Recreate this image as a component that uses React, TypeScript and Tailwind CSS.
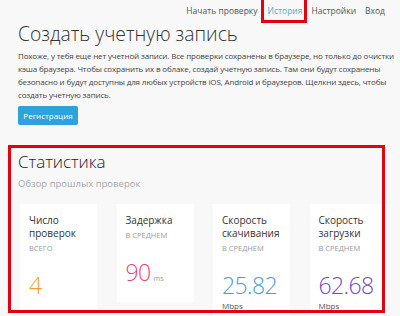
const font = { fontFamily: '"Open Sans", "Liberation Sans", sans-serif' };

type Stat = {
  title: string[];
  note: string;
  value: string;
  unit?: string;
  unitBelow?: boolean;
  color: string;
};

const stats: Stat[] = [
  { title: ["Число", "проверок"], note: "всего", value: "4", color: "text-[#f2a12e]" },
  { title: ["Задержка"], note: "в среднем", value: "90", unit: "ms", color: "text-[#e4477b]" },
  { title: ["Скорость", "скачивания"], note: "в среднем", value: "25.82", unit: "Mbps", unitBelow: true, color: "text-[#459ed8]" },
  { title: ["Скорость", "загрузки"], note: "в среднем", value: "62.68", unit: "Mbps", unitBelow: true, color: "text-[#7048cf]" }
];

export default function App() {
  return (
    <div className="h-[316px] w-[400px] overflow-hidden bg-[#f8f8f8] text-[#333]" style={font}>
      <nav className="flex h-[22px] items-center justify-end gap-[9px] pr-[15px] text-[8.5px] text-[#555]">
        <span className="mr-[1px]">Начать проверку</span>
        <span className="relative text-[#52acd9]">
          История
          <span className="absolute -left-[7px] -right-[5px] -bottom-[6px] -top-[9px] border-[3px] border-[#e4000f]" />
        </span>
        <span>Настройки</span>
        <span>Вход</span>
      </nav>

      <main className="px-[18px]">
        <h1 className="text-[19.3px] font-light leading-[24px] text-[#333]">Создать учетную запись</h1>
        <p className="mt-[3px] whitespace-nowrap text-[8px] leading-[13px] tracking-[-0.15px] text-[#444]">
          Похоже, у тебя еще нет учетной записи. Все проверки сохранены в браузере, но только до очистки
          <br />
          кэша браузера. Чтобы сохранить их в облаке, создай учетную запись. Там они будут сохранены
          <br />
          безопасно и будут доступны для любых устройств iOS, Android и браузеров. Щелкни здесь, чтобы
          <br />
          создать учетную запись.
        </p>
        <button
          className="mt-[5px] flex h-[19px] w-[60px] items-center justify-center rounded-[2px] bg-[#2ea3db] text-[8px] text-white"
          type="button"
        >
          Регистрация
        </button>

        <section className="relative mt-[23px] pt-[3px]">
          <span className="pointer-events-none absolute -left-[10px] -right-[3px] -top-[3px] z-10 h-[168px] border-[3px] border-[#e4000f]" />
          <h2 className="text-[17px] font-light leading-[22px] text-[#222]">Статистика</h2>
          <p className="mt-[5px] text-[9.5px] leading-[12px] text-[#aaa]">Обзор прошлых проверок</p>

          <div className="mt-[14px] flex items-start gap-[19.5px] pl-[2px]">
            {stats.map((stat) => (
              <div className="w-[77px] shrink-0 bg-white px-[9px] pb-[12px] pt-[10px]" key={stat.value}>
                <div className="text-[10px] leading-[13px] text-[#333]">
                  {stat.title.map((line) => (
                    <div key={line}>{line}</div>
                  ))}
                </div>
                <div className="mt-[3px] text-[7.5px] uppercase leading-[11px] text-[#999]">{stat.note}</div>
                <div className={`mt-[19px] whitespace-nowrap text-[23px] font-light leading-[24px] tracking-[-0.6px] ${stat.color}`}>
                  {stat.value}
                  {stat.unit && !stat.unitBelow ? (
                    <span className="ml-[3px] text-[7.5px] tracking-normal text-[#555]">{stat.unit}</span>
                  ) : null}
                </div>
                {stat.unitBelow ? <div className="mt-[4px] text-[8px] leading-[10px] text-[#555]">{stat.unit}</div> : null}
              </div>
            ))}
          </div>
        </section>
      </main>
    </div>
  );
}
